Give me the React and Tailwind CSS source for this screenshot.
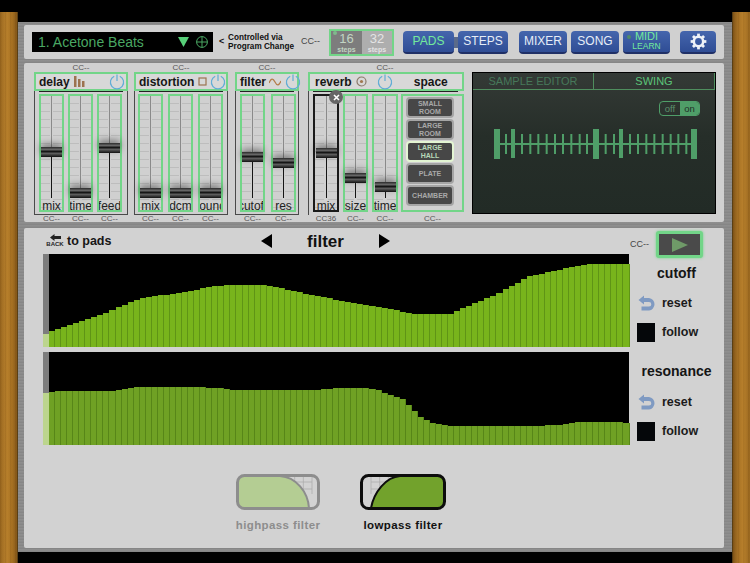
import React from "react";

const lerp = (pts, x) => {
  for (let i = 0; i < pts.length - 1; i++) {
    const [a, h1] = pts[i];
    const [b, h2] = pts[i + 1];
    if (x >= a && x <= b) return h1 + ((x - a) / (b - a)) * (h2 - h1);
  }
  return pts[pts.length - 1][1];
};

const cutoffPts = [[49,15],[103,33],[135,47],[147,50],[187,55],[208,60],[227,62],[267,62],[303,54],[353,44],[380,40],[413,33],[450,33],[463,39],[493,51],[518,65],[530,71],[557,77],[587,83],[629,83]];
const resPts = [[49,53],[67,54],[110,54],[140,58],[187,58],[220,57],[233,55],[310,55],[343,57],[370,57],[380,54],[402,46],[420,28],[433,22],[447,19],[537,19],[567,21],[580,23],[613,23],[629,22]];

const BARS = Array.from({ length: 96 }, (_, i) => 49 + i * 6.04 + 3);

function Chart({ pts, strip, barClass }) {
  return (
    <div className="flex h-[93px] w-[586px]">
      <div className="flex w-[6px] flex-col">
        <div className="flex-1 bg-[#7d7d7d]" />
        <div className="bg-[#bcd58e]" style={{ height: strip }} />
      </div>
      <div className="flex flex-1 items-end bg-black">
        {BARS.map((x, i) => (
          <div key={i} className={barClass} style={{ height: Math.round(lerp(pts, x)) }} />
        ))}
      </div>
    </div>
  );
}

function Power({ className = "" }) {
  return (
    <svg width="16" height="16" viewBox="0 0 16 16" fill="none" stroke="#62add6" strokeWidth="1.2" className={`shrink-0 ${className}`}>
      <path d="M5.2 2.2 A6.6 6.6 0 1 0 10.8 2.2" />
      <path d="M8 0.5 V7" />
    </svg>
  );
}

function Cc({ className = "", children = "CC--" }) {
  return <div className={`text-center text-[8px] leading-[9px] text-[#555] ${className}`}>{children}</div>;
}

function Fader({ label, top, w = 25, selected }) {
  return (
    <div
      className={`relative box-border h-[118px] shrink-0 border-2 bg-[linear-gradient(90deg,transparent_42%,#d0d0d0_42%,#d0d0d0_58%,transparent_58%),repeating-linear-gradient(180deg,transparent_0px,transparent_7px,#bdbdbd_7px,#bdbdbd_8px)] ${selected ? "border-[#1a1a1a]" : "border-[#72d588]"}`}
      style={{ width: w }}
    >
      <div className="flex h-[102px] flex-col items-center">
        <div className="w-px bg-[#8a8a8a]" style={{ height: top - 96 }} />
        <div className="h-[10px] w-[21px] shrink-0 bg-[linear-gradient(180deg,#2a2a2a,#666_25%,#161616_45%,#5c5c5c_65%,#111)] shadow-[0_-3px_7px_rgba(0,0,0,0.4)]" />
        <div className="w-px flex-1 bg-[#151515]" />
      </div>
      <div className="mt-[2px] flex h-[12px] justify-center overflow-x-clip whitespace-nowrap text-[12px] leading-[12px] text-[#222]">
        {label}
      </div>
      {selected && (
        <div className="absolute -top-[6px] left-[14px] flex h-[14px] w-[14px] items-center justify-center rounded-full bg-[#666]">
          <svg width="7" height="7" viewBox="0 0 7 7" stroke="#fff" strokeWidth="1.6"><path d="M1 1 L6 6 M6 1 L1 6" /></svg>
        </div>
      )}
    </div>
  );
}

function Group({ title, icon, width, faders, powerMargin, iconMargin = "ml-[4px]", gap = 4, pl = 3 }) {
  return (
    <div className="shrink-0" style={{ width }}>
      <Cc className="h-[9px]" />
      <div className="box-border flex h-[19px] items-center border-2 border-[#72d588] bg-[#d8d8d8] pl-[3px]">
        <span className="text-[12px] font-bold leading-none text-[#161616]">{title}</span>
        <span className={`shrink-0 ${iconMargin}`}>{icon}</span>
        <Power className={powerMargin} />
      </div>
      <div className="box-border h-[124px] border-x border-b border-[#4a4a4a]">
        <div className="mx-[4px] h-px bg-[#222]" />
        <div className="flex pt-[2px]" style={{ gap, paddingLeft: pl }}>
          {faders.map((f) => <Fader key={f.label} {...f} />)}
        </div>
      </div>
      <div className="-mt-[1px] flex" style={{ gap, paddingLeft: pl + 1 }}>
        {faders.map((f) => <Cc key={f.label} className="w-[25px]" />)}
      </div>
    </div>
  );
}

const roomBtn = ["SMALL|ROOM", "LARGE|ROOM", "LARGE|HALL", "PLATE", "CHAMBER"];

function Reverb() {
  return (
    <div className="w-[156px] shrink-0">
      <Cc className="h-[9px] w-[154px]" />
      <div className="box-border flex h-[19px] items-center border-2 border-[#72d588] bg-[#d8d8d8] pl-[5px]">
        <span className="text-[12px] font-bold leading-none text-[#161616]">reverb</span>
        <svg width="11" height="11" viewBox="0 0 11 11" fill="none" className="ml-[4px] shrink-0">
          <circle cx="5.5" cy="5.5" r="4.5" stroke="#8a7a6a" strokeWidth="1.2" />
          <circle cx="5.5" cy="5.5" r="1.6" fill="#a07850" />
        </svg>
        <Power className="ml-[10px]" />
        <span className="ml-[21px] text-[12px] font-bold leading-none text-[#161616]">space</span>
      </div>
      <div className="box-border h-[124px] border-l border-[#4a4a4a]">
        <div className="ml-[4px] mr-[6px] h-px bg-[#222]" />
        <div className="flex pl-[4px] pt-[2px]">
          <Fader label="mix" top={148} w={26} selected />
          <div className="w-[4px]" />
          <Fader label="size" top={173} />
          <div className="w-[4px]" />
          <Fader label="time" top={182} w={26} />
          <div className="w-[3px]" />
          <div className="box-border flex h-[118px] w-[63px] shrink-0 flex-col gap-[1px] border-2 border-[#72d588] pl-[3px] pt-[1px]">
            {roomBtn.map((b, i) => {
              const [a, c] = b.split("|");
              const on = i === 2;
              return (
                <div key={b} className={`box-border flex h-[21px] w-[48px] flex-col items-center justify-center rounded-[4px] border-2 bg-[#474747] text-center text-[7px] font-bold leading-[8px] ${on ? "border-[#e3f5d3] text-[#b7d8b9]" : "border-[#a5a5a5] text-[#a9a9a9]"}`}>
                  <span>{a}</span>
                  {c && <span>{c}</span>}
                </div>
              );
            })}
          </div>
        </div>
      </div>
      <div className="-mt-[1px] flex pl-[5px]">
        <Cc className="w-[26px]">CC36</Cc>
        <Cc className="ml-[4px] w-[25px]" />
        <Cc className="ml-[4px] w-[26px]" />
        <Cc className="ml-[3px] w-[63px]" />
      </div>
    </div>
  );
}

function Ruler() {
  const big = [497, 596, 694];
  const mid = [513, 621];
  const small = [120,168,193,217,242,267,291,316,341,363,419,444,492,516,541,565,590,614,637,661].map((v) => 465 + v / 3);
  return (
    <svg width="210" height="34" viewBox="0 0 210 34" className="block">
      <rect x="3" y="16" width="200" height="2" fill="#4f9e68" />
      {small.map((x) => <rect key={x} x={x - 491} y="7" width="2" height="20" fill="#4f9e68" />)}
      {mid.map((x) => <rect key={x} x={x - 493} y="2" width="4" height="29" fill="#4f9e68" />)}
      {big.map((x) => <rect key={x} x={x - 494} y="2" width="6" height="30" fill="#4f9e68" />)}
    </svg>
  );
}

function BlueBtn({ w, className = "text-[#e6edf7]", children }) {
  return (
    <div
      className={`relative box-border flex h-[23px] shrink-0 items-center justify-center rounded-[4px] border-b-2 border-[#1f2f66] bg-[linear-gradient(180deg,#4566ad,#2f4d95)] text-[12px] leading-none ${className}`}
      style={{ width: w }}
    >
      {children}
    </div>
  );
}

function Gear() {
  const teeth = [0, 45, 90, 135, 180, 225, 270, 315];
  return (
    <svg width="17" height="17" viewBox="0 0 16 16" fill="none" stroke="#eef2f8">
      <circle cx="8" cy="8" r="4.4" strokeWidth="2.4" />
      {teeth.map((a) => (
        <path key={a} d="M8 0.6 V3" strokeWidth="2.6" transform={`rotate(${a} 8 8)`} />
      ))}
    </svg>
  );
}

function ResetIcon() {
  return (
    <svg width="17" height="16" viewBox="0 0 17 16" className="shrink-0">
      <path d="M6 0.5 L0.5 5 L6 9.5 V7 H11 A2.3 2.3 0 0 1 11 11.6 H3.5 V15.5 H11 A6.3 6.3 0 0 0 11 3 H6 Z" fill="#7f9ac2" />
    </svg>
  );
}

function Follow({ mt }) {
  return (
    <div className={`flex h-[19px] items-center pl-[8px] ${mt}`}>
      <div className="h-[19px] w-[18px] bg-[#05070a]" />
      <span className="ml-[7px] text-[12.5px] font-bold text-[#1b1b1b]">follow</span>
    </div>
  );
}

function Reset({ mt }) {
  return (
    <div className={`flex h-[16px] items-center pl-[9px] ${mt}`}>
      <ResetIcon />
      <span className="ml-[7px] text-[12.5px] font-bold text-[#1b1b1b]">reset</span>
    </div>
  );
}

function Grid({ x, w }) {
  return (
    <g stroke="#a9a9a9" strokeWidth="0.7">
      {[0, 1, 2, 3].map((i) => <path key={i} d={`M${x + (i * w) / 3} 2 V20`} />)}
      <path d={`M${x} 8 H${x + w} M${x} 15 H${x + w}`} />
    </g>
  );
}

export default function App() {
  return (
    <div className="flex h-[563px] w-[750px] flex-col overflow-hidden bg-black font-['Liberation_Sans',Arial,sans-serif]">
      <div className="h-[12px] shrink-0 bg-black" />
      <div className="flex flex-1">
        <div className="w-[18px] shrink-0 border-r border-[#5a3f14] bg-[repeating-linear-gradient(90deg,rgba(90,50,0,0.16)_0px,transparent_2px,transparent_5px),linear-gradient(90deg,#9a6820,#b8802c_40%,#a87222_70%,#85581a)]" />
        <div className="flex w-[714px] flex-col">
          <div className="h-[10px] bg-black" />
          <div className="flex-1 bg-[repeating-linear-gradient(0deg,#8e8e8e_0px,#7e7e7e_1px,#989898_2px,#858585_3px)] pl-[6px] pr-[8px] pt-[3px]">
            {/* top bar */}
            <div className="flex h-[34px] items-center rounded-[2px] bg-[#d0d0d0]">
              <div className="ml-[8px] flex h-[20px] w-[181px] shrink-0 items-center whitespace-nowrap bg-black pl-[6px] text-[14px] text-[#4aa763]">
                <span className="w-[140px]">1. Acetone Beats</span>
                <svg width="11" height="10" viewBox="0 0 11 10" className="shrink-0"><path d="M0 0 H11 L5.5 10 Z" fill="#57cf78" /></svg>
                <svg width="12" height="12" viewBox="0 0 12 12" fill="none" stroke="#4aa763" className="ml-[7px] shrink-0"><circle cx="6" cy="6" r="5.4" /><path d="M6 .6 V11.4 M.6 6 H11.4" /></svg>
              </div>
              <span className="ml-[6px] w-[9px] text-[9px] font-bold text-[#111]">&lt;</span>
              <div className="w-[73px] whitespace-nowrap text-[8.2px] font-bold leading-[9px] text-[#111]">
                <div>Controlled via</div>
                <div>Program Change</div>
              </div>
              <span className="w-[28px] text-[9px] text-[#444]">CC--</span>
              <div className="relative box-border flex h-[27px] w-[65px] shrink-0 border-2 border-[#72d588]">
                <div className="flex w-[31px] flex-col items-center bg-[#7d7d7d] pt-[1px] text-[#c2d5c4]">
                  <span className="text-[13px] leading-[14px]">16</span>
                  <span className="text-[7px] font-bold leading-[7px]">steps</span>
                </div>
                <div className="flex flex-1 flex-col items-center bg-[#aeaeae] pt-[1px] text-[#e4e4e4]">
                  <span className="text-[13px] leading-[14px]">32</span>
                  <span className="text-[7px] font-bold leading-[7px]">steps</span>
                </div>
                <div className="absolute left-[2px] top-[0px] h-[4px] w-[4px] rounded-full bg-[#7fb98c]" />
              </div>
              <div className="ml-[9px] flex items-center">
                <BlueBtn w={51} className="text-[#73ea9c]">PADS</BlueBtn>
                <div className="h-[11px] w-[4px] bg-[#5a6a8a]" />
                <BlueBtn w={50}>STEPS</BlueBtn>
              </div>
              <div className="ml-[11px] flex gap-[4px]">
                <BlueBtn w={48}>MIXER</BlueBtn>
                <BlueBtn w={48}>SONG</BlueBtn>
                <BlueBtn w={47} className="flex-col text-[#73ea9c]">
                  <span className="text-[11px] leading-[11px]">MIDI</span>
                  <span className="text-[8.5px] leading-[9px]">LEARN</span>
                  <span className="absolute left-[4px] top-[4px] h-[4px] w-[4px] rounded-full bg-[#4f8a66]" />
                </BlueBtn>
              </div>
              <div className="ml-[10px]">
                <BlueBtn w={36}><Gear /></BlueBtn>
              </div>
            </div>

            {/* effects */}
            <div className="mt-[4px] flex h-[159px] rounded-[2px] bg-[#d0d0d0] pl-[10px]">
              <Group
                title="delay"
                width={94}
                pl={4}
                powerMargin="ml-[23px]"
                icon={<svg width="12" height="11" viewBox="0 0 12 11" fill="#9c7350" className="block"><rect x="0" y="0" width="2.5" height="11" /><rect x="4" y="3" width="2.5" height="8" /><rect x="8" y="5" width="2.5" height="6" /></svg>}
                faders={[{ label: "mix", top: 147 }, { label: "time", top: 188 }, { label: "feed", top: 143 }]}
              />
              <div className="w-[6px]" />
              <Group
                title="distortion"
                width={94}
                powerMargin="ml-[3px]"
                gap={5}
                icon={<svg width="9" height="9" viewBox="0 0 9 9" fill="none" stroke="#9c7350" strokeWidth="1.2" className="block"><rect x="1" y="1" width="7" height="7" /></svg>}
                faders={[{ label: "mix", top: 188 }, { label: "dcm", top: 188 }, { label: "round", top: 188 }]}
              />
              <div className="w-[7px]" />
              <Group
                title="filter"
                width={64}
                pl={4}
                iconMargin="ml-[3px]"
                powerMargin="ml-[4px]"
                gap={6}
                icon={<svg width="12" height="8" viewBox="0 0 12 8" fill="none" stroke="#b47c4a" strokeWidth="1.3" className="block"><path d="M0 5 C2 0 4 0 6 4 C8 8 10 8 12 3" /></svg>}
                faders={[{ label: "cutoff", top: 152 }, { label: "res", top: 158 }]}
              />
              <div className="w-[9px]" />
              <Reverb />
              <div className="w-[8px]" />
              <div className="mt-[9px] box-border flex h-[142px] w-[244px] shrink-0 flex-col border border-black bg-[linear-gradient(180deg,#343a36,#262e29_45%,#222b26)]">
                <div className="box-border flex h-[17px] border-b border-[#4f8e5e] text-[11px]">
                  <div className="flex w-[121px] items-center justify-center border-r border-[#4f8e5e] text-[#47785a]">SAMPLE EDITOR</div>
                  <div className="flex flex-1 items-center justify-center border-r border-[#4f8e5e] font-medium text-[#5cc479]">SWING</div>
                </div>
                <div className="mt-[11px] flex justify-end pr-[15px]">
                  <div className="box-border flex h-[15px] w-[41px] overflow-hidden rounded-[4px] border border-[#4f9e68] text-[9.5px] leading-[13px]">
                    <span className="w-[20px] text-center text-[#5b8f6c]">off</span>
                    <span className="flex-1 bg-[#4f9e68] text-center text-[#233029]">on</span>
                  </div>
                </div>
                <div className="mt-[11px] pl-[18px]">
                  <Ruler />
                </div>
              </div>
            </div>

            {/* filter page */}
            <div className="mt-[6px] flex h-[320px] flex-col rounded-[2px] bg-[#d2d2d2]">
              <div className="flex">
                <div className="w-[605px] shrink-0 pl-[19px]">
                  <div className="flex h-[26px] items-center">
                    <div className="flex w-[218px] shrink-0 items-center pl-[5px]">
                      <div className="flex w-[14px] flex-col items-center">
                        <svg width="11" height="7" viewBox="0 0 11 7" fill="#222"><path d="M0 3.5 L4.5 0 V2 H11 V5 H4.5 V7 Z" /></svg>
                        <span className="text-[6px] font-bold leading-[7px] text-[#222]">BACK</span>
                      </div>
                      <span className="ml-[5px] text-[12.5px] font-bold text-[#161616]">to pads</span>
                    </div>
                    <svg width="11" height="14" viewBox="0 0 11 14"><path d="M11 0 V14 L0 7 Z" fill="#000" /></svg>
                    <span className="w-[107px] text-center text-[17px] font-bold leading-none text-[#111]">filter</span>
                    <svg width="11" height="14" viewBox="0 0 11 14"><path d="M0 0 V14 L11 7 Z" fill="#000" /></svg>
                  </div>
                  <Chart pts={cutoffPts} strip={13} barClass="flex-1 border-r border-[#5f9416] bg-[#78b41c]" />
                  <div className="mt-[5px]">
                    <Chart pts={resPts} strip={52} barClass="flex-1 border-r border-[#578618] bg-[#6fa124]" />
                  </div>
                </div>
                <div className="w-[95px] pt-[3px]">
                  <div className="flex h-[27px] items-center">
                    <span className="ml-[1px] w-[26px] text-[9px] text-[#444]">CC--</span>
                    <div className="box-border flex h-[27px] w-[47px] items-center justify-center rounded-[3px] border-[3px] border-[#72d588] bg-[#4a4a4a] shadow-[0_0_3px_#72d588]">
                      <svg width="16" height="14" viewBox="0 0 16 14"><path d="M0 0 L16 7 L0 14 Z" fill="#6f9a68" /></svg>
                    </div>
                  </div>
                  <div className="mt-[6px] h-[18px] text-center text-[14px] font-bold leading-[18px] text-[#151515]">cutoff</div>
                  <Reset mt="mt-[13px]" />
                  <Follow mt="mt-[12px]" />
                  <div className="mt-[20px] h-[18px] text-center text-[14px] font-bold leading-[18px] text-[#151515]">resonance</div>
                  <Reset mt="mt-[14px]" />
                  <Follow mt="mt-[12px]" />
                </div>
              </div>
              <div className="mt-[29px] flex pl-[212px]">
                <div className="flex w-[84px] flex-col items-center">
                  <svg width="84" height="36" viewBox="0 0 84 36" fill="none">
                    <Grid x={50} w={26} />
                    <path d="M8 2 H44 C60 3 72 18 73 34 H8 Q2 34 2 28 V8 Q2 2 8 2 Z" fill="#b4cd93" />
                    <path d="M44 2 C60 3 72 18 73 34" stroke="#8d8d8d" strokeWidth="2" />
                    <rect x="1.5" y="1.5" width="81" height="33" rx="7" stroke="#8d8d8d" strokeWidth="3" />
                  </svg>
                  <span className="mt-[7px] whitespace-nowrap text-[11.5px] font-bold tracking-[0.4px] text-[#8d8d8d]">highpass filter</span>
                </div>
                <div className="ml-[40px] flex w-[86px] flex-col items-center">
                  <svg width="86" height="36" viewBox="0 0 86 36" fill="none">
                    <Grid x={11} w={26} />
                    <path d="M11 34 C14 18 26 3 40 2 H78 Q84 2 84 8 V28 Q84 34 78 34 Z" fill="#72a22c" />
                    <path d="M11 34 C14 18 26 3 40 2" stroke="#0d0d0d" strokeWidth="2" />
                    <rect x="1.5" y="1.5" width="83" height="33" rx="7" stroke="#0d0d0d" strokeWidth="3" />
                  </svg>
                  <span className="mt-[7px] whitespace-nowrap text-[11.5px] font-bold tracking-[0.4px] text-[#111]">lowpass filter</span>
                </div>
              </div>
            </div>
          </div>
          <div className="h-[11px] bg-black" />
        </div>
        <div className="w-[18px] shrink-0 border-l border-[#5a3f14] bg-[repeating-linear-gradient(90deg,rgba(90,50,0,0.16)_0px,transparent_2px,transparent_5px),linear-gradient(90deg,#85581a,#ab7526_35%,#b8802c_60%,#9a6820)]" />
      </div>
    </div>
  );
}
